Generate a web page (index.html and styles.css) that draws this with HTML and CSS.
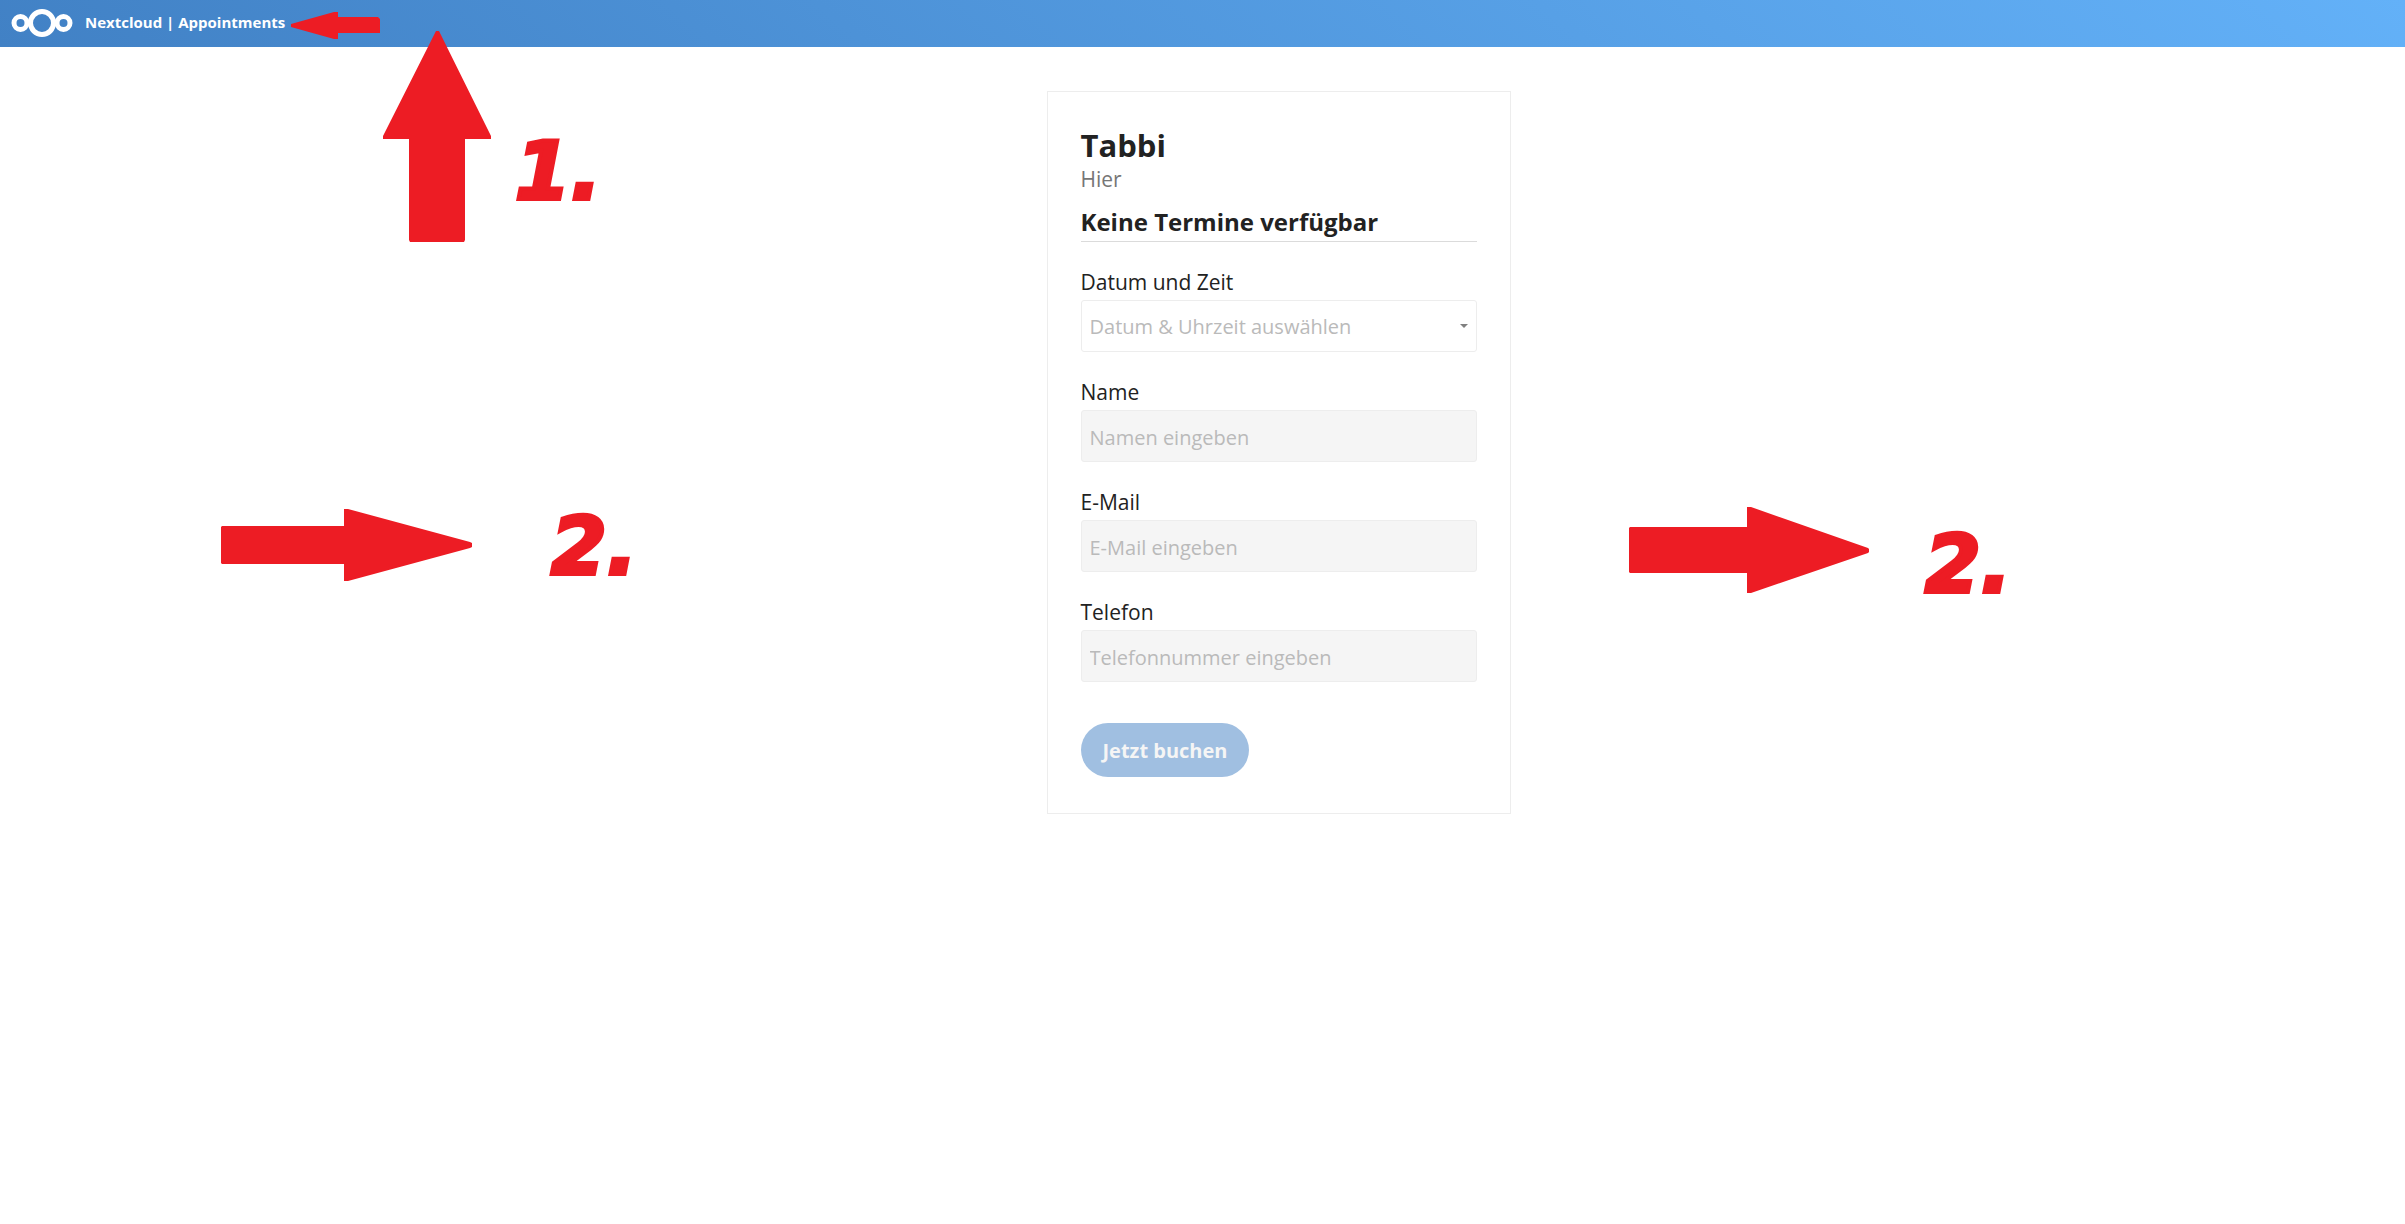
FILE: index.html
```
<!DOCTYPE html>
<html lang="de">
<head>
<meta charset="utf-8">
<title>Nextcloud | Appointments</title>
<link rel="stylesheet" href="styles.css">
</head>
<body>

<header id="header">
	<svg class="logo" width="62" height="30" viewBox="0 0 62 30" fill="none" stroke="#fff">
		<circle cx="31" cy="15" r="11.5" stroke-width="5"/>
		<circle cx="9.5" cy="15" r="6.5" stroke-width="5"/>
		<circle cx="52.5" cy="15" r="6.5" stroke-width="5"/>
	</svg>
	<span class="header-title">Nextcloud | Appointments</span>
</header>

<main id="content">
<form class="booking">
	<h1>Tabbi</h1>
	<div class="place">Hier</div>
	<h2>Keine Termine verfügbar</h2>

	<label for="appt_time">Datum und Zeit</label>
	<div class="select-wrap">
		<select id="appt_time" class="field">
			<option>Datum &amp; Uhrzeit auswählen</option>
		</select>
	</div>

	<label for="appt_name">Name</label>
	<input id="appt_name" class="field" type="text" placeholder="Namen eingeben" disabled>

	<label for="appt_email">E-Mail</label>
	<input id="appt_email" class="field" type="email" placeholder="E-Mail eingeben" disabled>

	<label for="appt_phone">Telefon</label>
	<input id="appt_phone" class="field" type="tel" placeholder="Telefonnummer eingeben" disabled>

	<button class="book" type="submit" disabled>Jetzt buchen</button>
</form>
</main>

<!-- red markers drawn over the page -->
<svg class="marks" width="2405" height="1224" viewBox="0 0 2405 1224">
	<path d="M291 24l43-12h4v5h40l2 2v14h-42v6h-4l-43-12z"/>
	<path d="M436 31h3l52 105v3h-26v101l-1 2h-54l-1-2v-101h-26v-3z"/>
	<path d="M221 527l1-1h122v-17h4l122 33 2 1v4l-2 1-122 33h-4v-17h-122l-1-1z"/>
	<path d="M1629 528l1-1h117v-20h4l117 41 1 1v3l-1 1-117 40h-4v-20h-117l-1-1z"/>
	<text x="515" y="199">1.</text>
	<text x="551" y="574">2.</text>
	<text x="1925" y="592">2.</text>
</svg>

</body>
</html>
```
FILE: styles.css
```
body {
	margin: 0;
	background: #fff;
	color: #222;
	font-family: "Open Sans", "Noto Sans", sans-serif;
	font-size: 21px;
	line-height: 30px;
}

#header {
	display: flex;
	align-items: center;
	gap: 12px;
	height: 47px;
	padding: 0 11px;
	box-sizing: border-box;
	background: linear-gradient(40deg, #4181c5 0%, #63b1f8 100%);
}

.logo {
	margin-bottom: 2px;
}

.header-title {
	color: #fff;
	font-size: 15px;
	font-weight: bold;
	line-height: 24px;
	padding-bottom: 4px;
}

#content {
	display: flex;
	justify-content: center;
	padding: 44px 0 44px 152px;
}

.booking {
	width: 396px;
	padding: 33px 33px 36px;
	border: 1px solid #ededed;
}

h1 {
	margin: 0;
	padding-bottom: 2px;
	font-size: 31px;
	line-height: 40px;
}

.place {
	color: #767676;
	line-height: 24px;
}

h2 {
	margin: 12px 0 24px;
	padding-bottom: 0;
	border-bottom: 1px solid #dbdbdb;
	font-size: 24px;
	line-height: 38px;
}

label {
	display: block;
	padding-top: 1px;
	margin-bottom: 3px;
}

.field {
	display: block;
	width: 100%;
	height: 52px;
	margin: 0 0 24px;
	padding: 2px 8px 0;
	box-sizing: border-box;
	border: 1px solid #ededed;
	border-radius: 3px;
	background: #fff;
	color: #bababa;
	font: inherit;
	font-size: 20px;
	appearance: none;
}

.field:disabled {
	background: #f5f5f5;
}

.field::placeholder {
	color: #bababa;
	opacity: 1;
}

.select-wrap {
	position: relative;
}

.select-wrap::after {
	content: "";
	position: absolute;
	top: 24px;
	right: 9px;
	border: 4px solid transparent;
	border-top-color: #808080;
	border-bottom: 0;
}

.book {
	height: 54px;
	margin: 17px 0 0;
	padding: 2px 22px 0;
	border: 0;
	border-radius: 27px;
	background: #a0bfe1;
	color: #f5f5f5;
	font: inherit;
	font-size: 20px;
	font-weight: bold;
}

.marks {
	position: absolute;
	top: 0;
	left: 0;
	fill: #ed1c24;
	pointer-events: none;
}

.marks text {
	font: italic bold 80px "DejaVu Sans", sans-serif;
	stroke: #ed1c24;
	stroke-width: 4px;
}
```
